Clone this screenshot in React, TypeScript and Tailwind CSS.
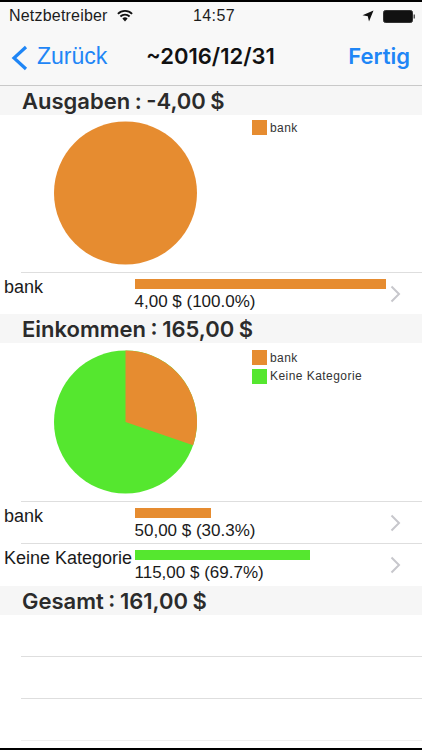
import React from "react";

const ORANGE = "bg-[#e68c30]";
const GREEN = "bg-[#55e72f]";

function Chevron() {
  return (
    <svg width="11" height="18" viewBox="0 0 11 18" className="shrink-0">
      <path d="M1.5 1.5 L9 9 L1.5 16.5" fill="none" stroke="#c7c7cc" strokeWidth="2" />
    </svg>
  );
}

function Header({ children }: { children: React.ReactNode }) {
  return (
    <div className="h-[29px] shrink-0 bg-[#f6f6f6] pl-[22px] pt-[1px] flex items-center text-[22px] leading-none font-semibold [word-spacing:-1px] text-[#2b2b2b] font-['Inter','Liberation_Sans',sans-serif]">
      {children}
    </div>
  );
}

function Legend({ items, top }: { items: { label: string; color: string }[]; top: string }) {
  return (
    <div className={`ml-[55px] flex flex-col gap-[3.5px] ${top}`}>
      {items.map((i) => (
        <div key={i.label} className="flex items-center gap-[3px] h-[15px]">
          <div className={`w-[15px] h-[15px] ${i.color}`} />
          <span className="text-[12px] leading-none tracking-[0.45px] text-[#333]">{i.label}</span>
        </div>
      ))}
    </div>
  );
}

function Row({ label, width, color, value, h }: { label: string; width: number; color: string; value: string; h: string }) {
  return (
    <div className={`${h} shrink-0 border-t border-[#dedede] ml-[21px] bg-white`}>
      <div className="flex h-full -ml-[21px]">
        <div className="w-[134.5px] shrink-0 pl-[4px] pt-[3px] text-[18px] leading-[22px] text-[#1a1a1a] whitespace-nowrap">{label}</div>
        <div className="flex-1 pt-[6px]">
          <div className={`h-[9.5px] ${color}`} style={{ width }} />
          <div className="mt-[2px] text-[17px] leading-[22px] text-[#1a1a1a] whitespace-nowrap">{value}</div>
        </div>
        <div className="w-[32px] pr-[21px] shrink-0 flex items-start pt-[12px] justify-end"><Chevron /></div>
      </div>
    </div>
  );
}

export default function App() {
  return (
    <div className="w-[422px] h-[750px] overflow-hidden bg-white flex flex-col font-['Liberation_Sans',sans-serif]">
      <div className="h-[2px] bg-black shrink-0" />
      <div className="h-[84px] bg-[#f8f8f8] border-b border-[#c9c9c9] shrink-0 flex flex-col">
        <div className="h-[28px] flex items-center px-[9px] text-[16px] text-[#1c1c1c] relative">
          <span className="tracking-[0.2px]">Netzbetreiber</span>
          <svg width="18" height="13" viewBox="0 0 18 13" className="ml-[8px] mb-[2px]">
            <path d="M9 12.5 L6.4 9.6 A3.6 3.6 0 0 1 11.6 9.6 Z" fill="#111" />
            <path d="M4.4 7.5 A6.5 6.5 0 0 1 13.6 7.5" fill="none" stroke="#111" strokeWidth="1.8" />
            <path d="M1.9 4.9 A10 10 0 0 1 16.1 4.9" fill="none" stroke="#111" strokeWidth="1.8" />
          </svg>
          <span className="absolute left-[193px] tracking-[0.4px]">14:57</span>
          <svg width="12" height="12" viewBox="0 0 12 12" className="ml-auto mr-[9px]">
            <path d="M11.5 0.5 L0.5 5.2 L5.8 6.3 L7 11.5 Z" fill="#111" />
          </svg>
          <svg width="33" height="13" viewBox="0 0 33 13" className="mr-[-3px]">
            <rect x="0.5" y="0.5" width="29" height="12" rx="2" fill="#111" stroke="#333" />
            <rect x="30.5" y="4.5" width="1.5" height="4" fill="#555" />
          </svg>
        </div>
        <div className="flex-1 flex items-center relative pb-[2px]">
          <svg width="19" height="28" viewBox="0 0 19 28" className="ml-[10px] mt-[3px]">
            <path d="M16 3 L4 14 L16 25" fill="none" stroke="#1f86f6" strokeWidth="3.2" />
          </svg>
          <span className="ml-[8px] text-[23px] text-[#1f86f6]">Zurück</span>
          <span className="absolute left-[146px] text-[22px] font-semibold text-[#111] font-['Inter',sans-serif]">~2016/12/31</span>
          <span className="ml-auto mr-[12px] text-[22px] font-semibold text-[#1f86f6] font-['Inter',sans-serif]">Fertig</span>
        </div>
      </div>

      <Header>Ausgaben : -4,00 $</Header>
      <div className="h-[157px] flex bg-white shrink-0">
        <svg width="197" height="157" viewBox="0 0 197 157" className="shrink-0">
          <circle cx="125.5" cy="78" r="71.5" fill="#e68c30" />
        </svg>
        <Legend top="pt-[5px]" items={[{ label: "bank", color: ORANGE }]} />
      </div>
      <Row h="h-[42px]" label="bank" width={251.5} color={ORANGE} value="4,00 $ (100.0%)" />
      <Header>Einkommen : 165,00 $</Header>
      <div className="h-[158px] flex bg-white shrink-0">
        <svg width="197" height="158" viewBox="0 0 197 158" className="shrink-0">
          <circle cx="125.5" cy="79" r="71.5" fill="#55e72f" />
          <path d="M125.5 79 L125.5 7.5 A71.5 71.5 0 0 1 193.1 102.3 Z" fill="#e68c30" />
        </svg>
        <Legend top="pt-[7px]" items={[{ label: "bank", color: ORANGE }, { label: "Keine Kategorie", color: GREEN }]} />
      </div>
      <Row h="h-[42px]" label="bank" width={76.7} color={ORANGE} value="50,00 $ (30.3%)" />
      <Row h="h-[43px]" label="Keine Kategorie" width={175.7} color={GREEN} value="115,00 $ (69.7%)" />
      <Header>Gesamt : 161,00 $</Header>
      <div className="h-[41px] shrink-0" />
      <div className="h-[42px] border-t border-[#dedede] ml-[21px] shrink-0" />
      <div className="h-[42px] border-t border-[#dedede] ml-[21px] shrink-0" />
      <div className="h-[8px] border-t border-[#efefef] ml-[21px] shrink-0" />
      <div className="h-[2px] bg-black shrink-0" />
    </div>
  );
}
